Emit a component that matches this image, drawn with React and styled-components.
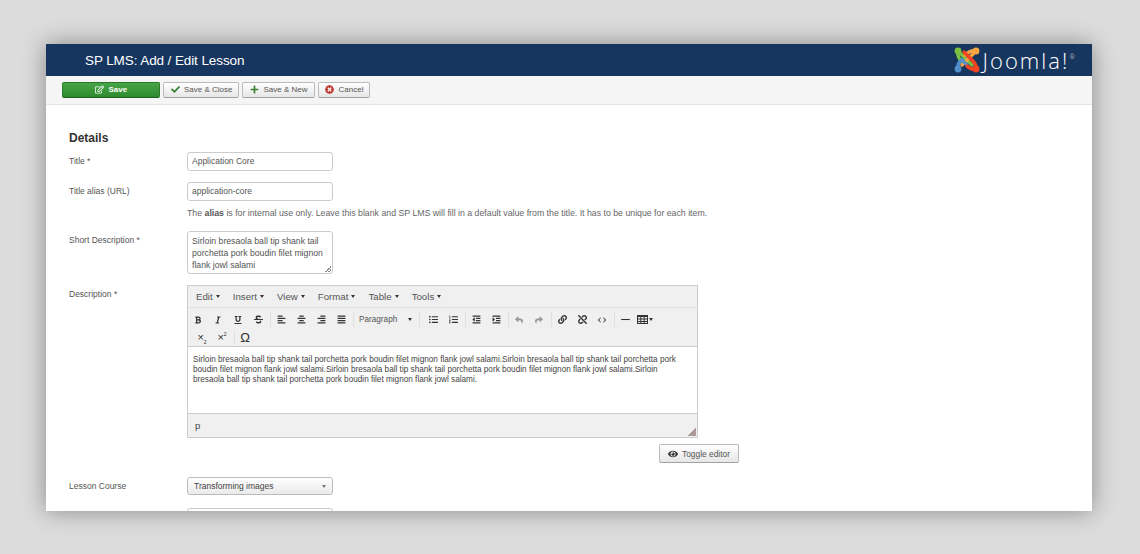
import React from 'react'
import styled, { createGlobalStyle } from 'styled-components'
import {
  FaRegEdit, FaCheck, FaPlus, FaTimesCircle, FaEye, FaBold, FaItalic, FaUnderline, FaStrikethrough,
  FaAlignLeft, FaAlignCenter, FaAlignRight, FaAlignJustify, FaListUl, FaListOl, FaOutdent, FaIndent,
  FaLink, FaUnlink, FaReply, FaShare,
} from 'react-icons/fa'
import { MdCode, MdHorizontalRule } from 'react-icons/md'

const Global = createGlobalStyle`
  html, body { margin: 0; padding: 0; background: #dcdcdc; }
  body { font-family: "Liberation Sans", Arial, sans-serif; color: #555; overflow: hidden; }
`

const SAMPLE = 'Sirloin bresaola ball tip shank tail porchetta pork boudin filet mignon flank jowl salami.'

function JoomlaMark() {
  return (
    <svg width="26" height="26" viewBox="0 0 26 26" fill="none" strokeWidth="3.4" strokeLinecap="round">
      <path d="M4 4 L11 11 L18 18" stroke="#7ac143" />
      <path d="M4 4 C3 9 5 12 8 15" stroke="#7ac143" />
      <circle cx="4" cy="4" r="3.4" fill="#7ac143" />
      <path d="M22 4 L15 11 L8 18" stroke="#f9a541" />
      <path d="M22 4 C17 3 14 5 11 8" stroke="#f9a541" />
      <circle cx="22" cy="4" r="3.4" fill="#f9a541" />
      <path d="M4 22 C3 18 5 15 8 13 L13 18" stroke="#5091cd" />
      <circle cx="4" cy="22" r="3.4" fill="#5091cd" />
      <path d="M22 22 C23 18 20 15 18 13 L10 5" stroke="#f44321" />
      <path d="M22 22 C18 23 15 21 13 19" stroke="#f44321" />
      <circle cx="22" cy="22" r="3.4" fill="#f44321" />
    </svg>
  )
}

function TableIcon() {
  return (
    <svg width="11" height="9" viewBox="0 0 11 9" fill="none" stroke="#333" strokeWidth="1">
      <rect x="0.5" y="0.5" width="10" height="8" />
      <path d="M0 1.5 H11 M0 4 H11 M0 6.5 H11 M3.8 1 V9 M7.2 1 V9" />
    </svg>
  )
}

export default function App() {
  return (
    <>
      <Global />
      <Stage>
        <Window>
          <Header>
            <Title>SP LMS: Add / Edit Lesson</Title>
            <Logo>
              <JoomlaMark />
              <LogoText>Joomla!<LogoReg>®</LogoReg></LogoText>
            </Logo>
          </Header>
          <Toolbar>
            <SaveButton><FaRegEdit size={9} />Save</SaveButton>
            <Button><FaCheck size={9} color="#378137" />Save &amp; Close</Button>
            <Button><FaPlus size={9} color="#378137" />Save &amp; New</Button>
            <Button><FaTimesCircle size={9} color="#bd362f" />Cancel</Button>
          </Toolbar>
          <Content>
            <Heading>Details</Heading>
            <Row>
              <Label>Title *</Label>
              <Input>Application Core</Input>
            </Row>
            <Row>
              <Label>Title alias (URL)</Label>
              <div>
                <Input>application-core</Input>
                <Help>The <b>alias</b> is for internal use only. Leave this blank and SP LMS will fill in a default value from the title. It has to be unique for each item.</Help>
              </div>
            </Row>
            <Row>
              <Label>Short Description *</Label>
              <TextArea>
                Sirloin bresaola ball tip shank tail porchetta pork boudin filet mignon flank jowl salami
                <Grip />
              </TextArea>
            </Row>
            <Row>
              <Label>Description *</Label>
              <div>
                <Editor>
                  <MenuBar>
                    {['Edit', 'Insert', 'View', 'Format', 'Table', 'Tools'].map((m) => (
                      <MenuItem key={m}>{m}<Caret /></MenuItem>
                    ))}
                  </MenuBar>
                  <ToolRows>
                    <ToolRow>
                      <Tool><FaBold size={8} /></Tool>
                      <Tool><FaItalic size={8} /></Tool>
                      <Tool><FaUnderline size={8} /></Tool>
                      <Tool><FaStrikethrough size={9} /></Tool>
                      <Sep />
                      <Tool><FaAlignLeft size={9} /></Tool>
                      <Tool><FaAlignCenter size={9} /></Tool>
                      <Tool><FaAlignRight size={9} /></Tool>
                      <Tool><FaAlignJustify size={9} /></Tool>
                      <Sep />
                      <FormatSelect>Paragraph<Caret /></FormatSelect>
                      <Sep $after={3} />
                      <Tool><FaListUl size={9} /></Tool>
                      <Tool><FaListOl size={9} /></Tool>
                      <Sep />
                      <Tool><FaOutdent size={9} /></Tool>
                      <Tool><FaIndent size={9} /></Tool>
                      <Sep />
                      <Tool $muted><FaReply size={8} /></Tool>
                      <Tool $muted><FaShare size={8} /></Tool>
                      <Sep />
                      <Tool><FaLink size={9} /></Tool>
                      <Tool><FaUnlink size={9} /></Tool>
                      <Tool><MdCode size={10} /></Tool>
                      <Sep />
                      <Tool><MdHorizontalRule size={13} /></Tool>
                      <Tool><TableIcon /><Caret /></Tool>
                    </ToolRow>
                    <ToolRow $indent={4}>
                      <Tool><Script>×<sub>2</sub></Script></Tool>
                      <Tool><Script>×<sup>2</sup></Script></Tool>
                      <Sep />
                      <Tool><Omega>Ω</Omega></Tool>
                    </ToolRow>
                  </ToolRows>
                  <EditArea>{SAMPLE + SAMPLE + SAMPLE + SAMPLE}</EditArea>
                  <StatusBar>p<Resize /></StatusBar>
                </Editor>
                <ToggleRow>
                  <ToggleButton><FaEye size={10} color="#333" />Toggle editor</ToggleButton>
                </ToggleRow>
              </div>
            </Row>
            <Row>
              <Label>Lesson Course</Label>
              <Select>Transforming images<SelectCaret /></Select>
            </Row>
            <Input />
          </Content>
        </Window>
      </Stage>
    </>
  )
}

const Stage = styled.div`
  width: 1140px;
  height: 554px;
  padding: 44px 48px 43px 46px;
  box-sizing: border-box;
`

const Window = styled.div`
  height: 467px;
  background: #fff;
  overflow: hidden;
  box-shadow: 0 0 22px rgba(0, 0, 0, 0.38);
  display: flex;
  flex-direction: column;
`

const Header = styled.div`
  height: 32px;
  flex: none;
  background: #17365f;
  display: flex;
  align-items: center;
  justify-content: space-between;
  padding: 0 17px 0 39px;
`

const Title = styled.div`
  color: #fff;
  font-size: 13.5px;
  letter-spacing: -0.1px;
`

const Logo = styled.div`
  display: flex;
  align-items: center;
  gap: 3px;
`

const LogoText = styled.span`
  font-family: "Open Sans", "Lato", sans-serif;
  font-weight: 300;
  font-size: 22px;
  line-height: 26px;
  color: #fff;
  letter-spacing: 2px;
`

const LogoReg = styled.sup`
  font-size: 7px;
  color: #ccc;
  vertical-align: 10px;
  line-height: 0;
  letter-spacing: 0;
`

const Toolbar = styled.div`
  height: 29px;
  flex: none;
  box-sizing: border-box;
  background: #f5f5f5;
  border-bottom: 1px solid #e5e5e5;
  display: flex;
  align-items: center;
  gap: 3px;
  padding: 0 0 1px 16px;
`

const Button = styled.div`
  height: 16px;
  box-sizing: border-box;
  display: inline-flex;
  align-items: center;
  gap: 4.5px;
  padding: 0 6px 0 6.5px;
  border: 1px solid #bbb;
  border-bottom-color: #a2a2a2;
  border-radius: 2px;
  background: linear-gradient(#fff, #e6e6e6);
  font-size: 8px;
  color: #555;
  white-space: nowrap;
  svg { flex: none; }
`

const SaveButton = styled(Button)`
  width: 98px;
  padding: 0;
  justify-content: center;
  color: #fff;
  font-weight: 700;
  background: linear-gradient(#46a546, #2f8a2f);
  border-color: #2a7a2a;
  border-bottom-color: #1f5f1f;
`

const ToggleButton = styled(Button)`
  height: 19px;
  font-size: 8.4px;
  padding: 0 8px 0 7.5px;
`

const Content = styled.div`
  padding: 26px 0 0 23px;
  flex: 1;
`

const Heading = styled.div`
  font-size: 12px;
  line-height: 14px;
  font-weight: 700;
  color: #333;
  margin-bottom: 7px;
`

const Row = styled.div`
  display: flex;
  align-items: flex-start;
  margin-bottom: 11px;
`

const Label = styled.div`
  width: 118px;
  flex: none;
  font-size: 8.5px;
  line-height: 10px;
  padding-top: 4px;
  color: #555;
`

const Input = styled.div`
  width: 146px;
  height: 19px;
  box-sizing: border-box;
  border: 1px solid #ccc;
  border-radius: 3px;
  padding: 0 4px;
  font-size: 8.5px;
  line-height: 17px;
  color: #555;
  margin-left: ${(p) => (p.children ? 0 : '118px')};
`

const Help = styled.div`
  font-size: 8.75px;
  line-height: 10px;
  margin: 7px 0 2px;
  color: #666;
  white-space: nowrap;
  b { color: #555; }
`

const TextArea = styled.div`
  position: relative;
  width: 146px;
  height: 43px;
  box-sizing: border-box;
  border: 1px solid #ccc;
  border-radius: 3px;
  padding: 3px 4px;
  font-size: 8.7px;
  line-height: 12px;
  color: #555;
`

const Grip = styled.i`
  position: absolute;
  right: 1px;
  bottom: 1px;
  width: 6px;
  height: 6px;
  background: linear-gradient(135deg, transparent 50%, #888 50%, #888 60%, transparent 60%, transparent 75%, #888 75%, #888 85%, transparent 85%);
`

const Editor = styled.div`
  width: 511px;
  height: 153px;
  box-sizing: border-box;
  border: 1px solid #ccc;
  display: flex;
  flex-direction: column;
`

const MenuBar = styled.div`
  height: 22px;
  flex: none;
  box-sizing: border-box;
  background: #f0f0f0;
  border-bottom: 1px solid #e2e2e2;
  display: flex;
  align-items: center;
  padding-left: 8px;
  gap: 13px;
`

const MenuItem = styled.span`
  font-size: 9.7px;
  color: #555;
  display: inline-flex;
  align-items: center;
  gap: 3px;
`

const Caret = styled.i`
  display: inline-block;
  width: 0;
  height: 0;
  border-left: 2.5px solid transparent;
  border-right: 2.5px solid transparent;
  border-top: 3px solid #333;
`

const ToolRows = styled.div`
  height: 39px;
  flex: none;
  box-sizing: border-box;
  background: #f0f0f0;
  border-bottom: 1px solid #ccc;
  padding-top: 2.5px;
`

const ToolRow = styled.div`
  height: 18px;
  display: flex;
  align-items: center;
  padding-left: ${(p) => p.$indent || 0}px;
`

const Tool = styled.span`
  width: 20px;
  height: 16px;
  flex: none;
  display: inline-flex;
  align-items: center;
  justify-content: center;
  gap: 1px;
  color: ${(p) => (p.$muted ? '#9a9a9a' : '#333')};
`

const Script = styled.span`
  font-size: 11px;
  line-height: 11px;
  color: #333;
  sub, sup { font-size: 5px; line-height: 0; }
`

const Omega = styled.span`
  font-size: 13px;
  color: #333;
`

const Sep = styled.i`
  width: 1px;
  height: 15px;
  margin: 0 ${(p) => p.$after || 0}px 0 2px;
  background: #e0e0e0;
  flex: none;
`

const FormatSelect = styled.span`
  width: 63px;
  flex: none;
  box-sizing: border-box;
  padding: 0 5px;
  font-size: 8.2px;
  color: #555;
  display: inline-flex;
  align-items: center;
  justify-content: space-between;
`

const EditArea = styled.div`
  height: 66px;
  flex: none;
  box-sizing: border-box;
  padding: 7.5px 12px 7.5px 5px;
  font-size: 8.2px;
  line-height: 10px;
  color: #444;
  background: #fff;
`

const StatusBar = styled.div`
  flex: 1;
  position: relative;
  background: #f0f0f0;
  border-top: 1px solid #ccc;
  font-size: 9.5px;
  color: #444;
  padding: 6px 7px;
`

const Resize = styled.i`
  position: absolute;
  right: 1px;
  bottom: 1px;
  width: 8px;
  height: 8px;
  background: linear-gradient(135deg, transparent 50%, #a99 50%);
`

const ToggleRow = styled.div`
  display: flex;
  justify-content: flex-end;
  width: 552px;
  margin-top: 6px;
  margin-bottom: 3px;
`

const Select = styled.div`
  position: relative;
  width: 146px;
  height: 18px;
  box-sizing: border-box;
  border: 1px solid #bbb;
  border-radius: 3px;
  padding: 0 6px;
  font-size: 8.5px;
  line-height: 16px;
  color: #444;
  background: linear-gradient(#fff, #eaeaea);
  margin-bottom: 2px;
`

const SelectCaret = styled(Caret)`
  position: absolute;
  right: 6px;
  top: 7px;
  border-top-color: #777;
`
